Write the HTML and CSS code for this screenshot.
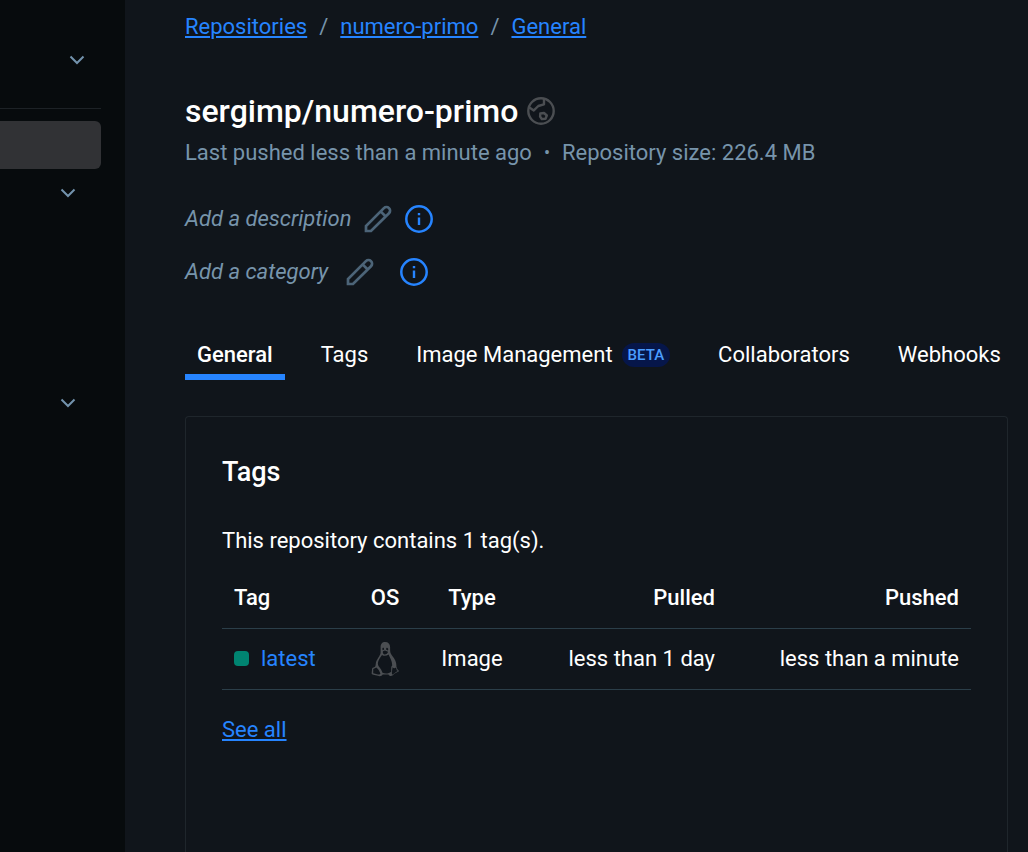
FILE: index.html
```
<!DOCTYPE html>
<html lang="en">
<head>
<meta charset="utf-8">
<meta name="viewport" content="width=device-width, initial-scale=1">
<title>sergimp/numero-primo</title>
<link rel="stylesheet" href="styles.css">
</head>
<body>
<svg class="sprite" aria-hidden="true">
  <symbol id="chevron" viewBox="0 0 16 16"><path d="M1.500 4.500 8 11l6.500-6.500" fill="none" stroke="currentColor" stroke-width="2"/></symbol>
  <symbol id="pencil" viewBox="0 0 28 28"><path d="M2 26v-5L19.900 3.100a3.600 3.600 0 0 1 5.100 5.100L7 26zM16.600 6.400l5.100 5.100" fill="none" stroke="currentColor" stroke-width="2.700"/></symbol>
  <symbol id="info" viewBox="0 0 28 28"><circle cx="14" cy="14" r="12.700" fill="none" stroke="currentColor" stroke-width="2.500"/><path d="M14 12.500v7.500M14 8v2.300" stroke="currentColor" stroke-width="2.400"/></symbol>
</svg>
<div class="app">
  <aside class="sidebar">
    <button class="toggle toggle-account" aria-label="Switch account"><svg><use href="#chevron"/></svg></button>
    <nav class="side-nav" aria-label="Sidebar">
      <a class="side-current" href="#" aria-label="Repositories" aria-current="page"></a>
      <button class="toggle" aria-label="Expand settings"><svg><use href="#chevron"/></svg></button>
      <button class="toggle toggle-last" aria-label="Expand billing"><svg><use href="#chevron"/></svg></button>
    </nav>
  </aside>
  <main class="main">
    <nav class="crumbs" aria-label="Breadcrumb">
      <a href="#">Repositories</a><span>/</span><a href="#">numero-primo</a><span>/</span><a href="#">General</a>
    </nav>
    <header class="repo">
      <div class="title-row">
        <h1>sergimp/numero-primo</h1>
        <svg class="globe" viewBox="0 0 28 28" role="img" aria-label="Public">
          <g fill="none" stroke="currentColor" stroke-width="2.400" stroke-linejoin="round"><circle cx="14" cy="14" r="12.700"/><path d="M2 10.200 6.800 13.400 11.300 9l5.700-1.700V1.800M13.300 16.500l3.700-.5 2.800 2.500-1.300 3.300-3.700.2-1.700-2.500z"/></g>
        </svg>
      </div>
      <p class="meta"><span>Last pushed less than a minute ago</span><span class="dot">•</span><span>Repository size: 226.4 MB</span></p>
    </header>
    <div class="edit-row">
      <em>Add a description</em>
      <button class="icon-btn pencil" aria-label="Edit description"><svg><use href="#pencil"/></svg></button>
      <button class="icon-btn info" aria-label="About descriptions"><svg><use href="#info"/></svg></button>
    </div>
    <div class="edit-row category">
      <em>Add a category</em>
      <button class="icon-btn pencil" aria-label="Edit category"><svg><use href="#pencil"/></svg></button>
      <button class="icon-btn info" aria-label="About categories"><svg><use href="#info"/></svg></button>
    </div>
    <nav class="tabs" aria-label="Repository">
      <a class="tab active" href="#" aria-current="page">General</a>
      <a class="tab" href="#">Tags</a>
      <a class="tab" href="#">Image Management <span class="beta">BETA</span></a>
      <a class="tab" href="#">Collaborators</a>
      <a class="tab" href="#">Webhooks</a>
    </nav>
    <section class="card">
      <h2>Tags</h2>
      <p>This repository contains 1 tag(s).</p>
      <table>
        <thead><tr><th class="c-tag">Tag</th><th class="c-os">OS</th><th class="c-type">Type</th><th class="c-pulled">Pulled</th><th class="c-pushed">Pushed</th></tr></thead>
        <tbody><tr>
          <td class="c-tag"><span class="status"></span><a href="#">latest</a></td>
          <td class="c-os"><svg class="tux" viewBox="0 0 28 36" role="img" aria-label="Linux">
            <path fill="currentColor" fill-rule="evenodd" d="M14.200 1C11 1 9.600 3.100 9.600 6v5.700C9.400 14.600 5.200 18.600 4.800 22.500c-.2 2-.2 2.800-1.100 3.500-1.800.6-2.900.9-2.700 2.700l-.4 3.800c.3 1.700 4.900 1.500 7.300 2.500 1.700.6 3-.4 3.800-1.500h5.800c.7 1.700 2.800 2 4.300.7 1.700-1.700 3-2.500 5.400-3.400 1-.8.7-1.400-.6-2.400-.8-1-.5-2.200-1.200-2.700.2-4.100-1-7.100-4.400-11.200-1.800-2.500-1.900-3.500-1.900-8.500 0-3-1.800-5-4.900-5zM11.500 7.300c.9-.9 1.600-.4 1.600 1.200l-1.200.8c-.5-.6-.7-1.400-.4-2zm3.600 1.300c-.1-1.700 1-2.400 1.900-1.200.4.700.2 1.500-.3 2.100zM12 10.300l2-.7 3 1.100c0 1.600-2 2.800-3.300 2.800S11.400 12 12 10.300zM11 14c1.900 1.300 4.500 1.100 6.600-.5 1 3 3.700 6.300 3.600 11-.7.500-1 1.300-1 2.500v3.700c-2.500 2.100-6 2.300-8.700 1-.7-2-1.700-4-4-6.700-1.600-2.600.2-6.400 1.600-8.300zM2.300 27.900l3.100-1.300c1.800 1.600 3 3.300 4 6-.7 1.500-2 1-3.400.6l-3.800-1zm19.300-1.600c1.100 1.500 2.300 1.200 3.500.3l.6 2.700 1.300.8c-2.400 1-3.700 2.600-5.500 3.400-1.300-.4-.2-4.600.1-7.200z"/>
          </svg></td>
          <td class="c-type">Image</td><td class="c-pulled">less than 1 day</td><td class="c-pushed">less than a minute</td>
        </tr></tbody>
      </table>
      <a class="see-all" href="#">See all</a>
    </section>
  </main>
</div>
</body>
</html>
```
FILE: styles.css
```
* { box-sizing: border-box; }
body {
  margin: 0;
  background: #10151b;
  color: #fff;
  font: 22px/30px Roboto, "Liberation Sans", sans-serif;
}
h1, h2, p { margin: 0; }
a { color: #2684ff; text-underline-offset: 2px; }
button { border: 0; padding: 0; background: none; color: inherit; font: inherit; cursor: pointer; }
svg { display: block; }
.sprite { position: absolute; width: 0; height: 0; }
.app { display: flex; min-height: 100vh; overflow: hidden; }

.sidebar {
  flex: 0 0 125px;
  display: flex;
  flex-direction: column;
  background: #070b0d;
  padding: 52px 24px 0 0;
}
.toggle { align-self: flex-end; margin-right: 25px; color: #7393ad; }
.toggle svg { width: 16px; height: 16px; }
.toggle-account { margin: 0 16px 40px 0; }
.side-nav {
  display: flex;
  flex-direction: column;
  border-top: 1px solid #1d2226;
  padding-top: 12px;
}
.side-current { height: 48px; margin-bottom: 16px; border-radius: 0 6px 6px 0; background: #313235; }
.toggle-last { margin-top: 194px; }

.main {
  flex: 1;
  min-width: 0;
  display: flex;
  flex-direction: column;
  padding: 12px 20px 0 60px;
}
.crumbs { display: flex; gap: 12px; color: #7794ab; }
.title-row { display: flex; align-items: center; gap: 9px; }
.repo { margin-top: 48px; }
h1 { font-size: 32px; line-height: 42px; font-weight: 500; }
.globe { width: 28px; height: 28px; color: #4b4e52; }
.meta { display: flex; gap: 12px; margin-top: 6px; color: #7794ab; }
.dot { font-size: 18px; }

.edit-row { display: flex; align-items: center; gap: 13px; margin-top: 36px; color: #7794ab; }
.icon-btn svg { width: 28px; height: 28px; }
.pencil { color: #4c6478; }
.info { color: #2684ff; }
.category { margin-top: 23px; gap: 18px; }
.category .info { margin-left: 8px; }

.tabs { display: flex; gap: 24px; margin-top: 46px; white-space: nowrap; }
.tab {
  display: flex;
  align-items: center;
  gap: 9px;
  padding: 7px 12px 4px;
  border-bottom: 6px solid transparent;
  color: #fff;
  text-decoration: none;
}
.active { border-color: #2684ff; font-weight: 500; }
.beta { padding: 0 6px; border-radius: 12px; background: #06164a; color: #4a9dff; font-size: 15px; line-height: 24px; font-weight: 500; }

.card {
  flex: 1;
  margin-top: 36px;
  padding: 36px;
  border: 1px solid #1f262c;
  border-bottom: 0;
  border-radius: 4px 4px 0 0;
}
h2 { font-size: 27px; line-height: 38px; font-weight: 500; }
.card p { margin-top: 35px; }
table { width: 100%; margin: 12px 0 25px; table-layout: fixed; border-collapse: collapse; }
th, td { height: 60px; padding: 0 12px; border-bottom: 1px solid #2b3e49; font-weight: 400; text-align: center; white-space: nowrap; }
th { font-weight: 500; }
td { height: 61px; }
.c-tag { width: 124px; text-align: left; }
.c-os { width: 78px; }
.c-type { width: 96px; }
.c-pulled { width: 207px; text-align: right; }
.c-pushed { text-align: right; }
td a { text-decoration: none; }
.status { display: inline-block; width: 15px; height: 15px; margin-right: 12px; border-radius: 4px; background: #008471; }
.tux { width: 28px; height: 36px; margin: 0 auto; color: #4b4e52; }
```
